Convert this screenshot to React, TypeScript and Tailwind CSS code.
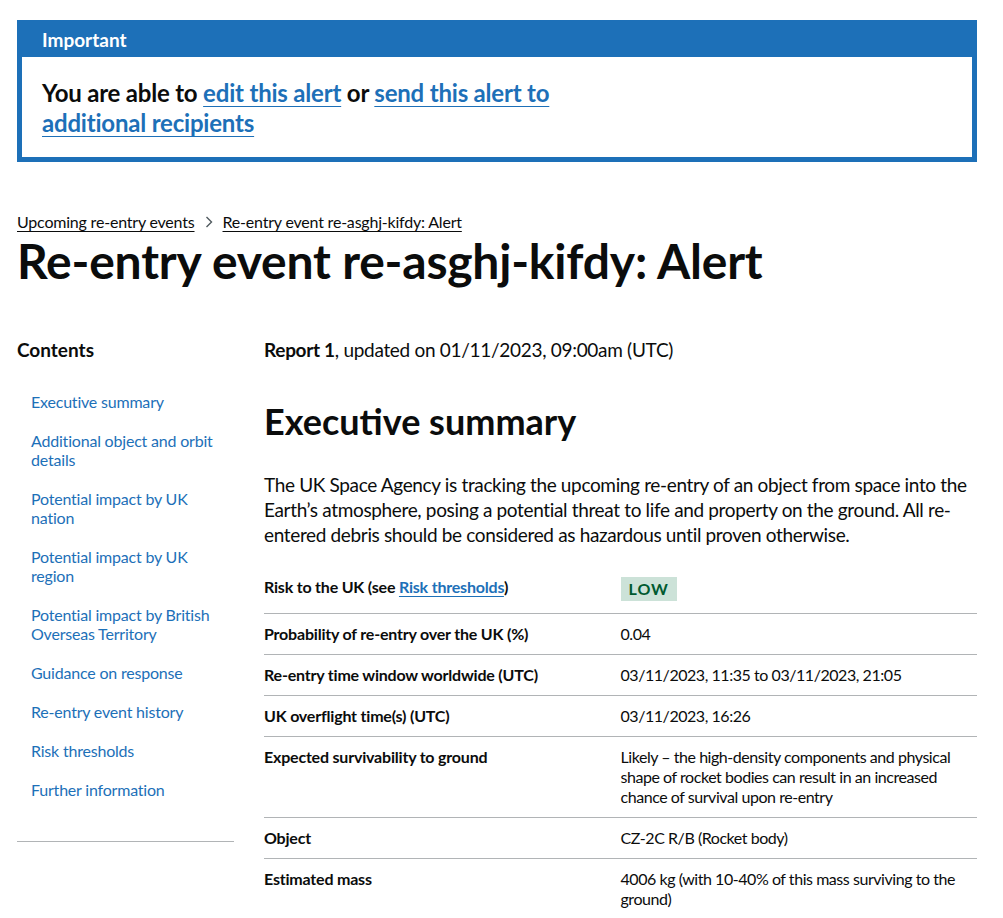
const contents = [
  "Executive summary",
  "Additional object and orbit details",
  "Potential impact by UK nation",
  "Potential impact by UK region",
  "Potential impact by British Overseas Territory",
  "Guidance on response",
  "Re-entry event history",
  "Risk thresholds",
  "Further information",
];

const rows = [
  { label: "Probability of re-entry over the UK (%)", value: "0.04" },
  {
    label: "Re-entry time window worldwide (UTC)",
    value: "03/11/2023, 11:35 to 03/11/2023, 21:05",
  },
  { label: "UK overflight time(s) (UTC)", value: "03/11/2023, 16:26" },
  {
    label: "Expected survivability to ground",
    value:
      "Likely – the high-density components and physical shape of rocket bodies can result in an increased chance of survival upon re-entry",
  },
  { label: "Object", value: "CZ-2C R/B (Rocket body)" },
  {
    label: "Estimated mass",
    value: "4006 kg (with 10-40% of this mass surviving to the ground)",
  },
];

export default function App() {
  return (
    <div className="min-h-screen bg-white px-[17px] pt-5 pb-10 font-['Lato','Liberation_Sans',sans-serif] text-[#0b0c0c]">
      {/* Notification banner */}
      <div className="w-[960px] border-[5px] border-[#1d70b8] bg-[#1d70b8]">
        <div className="px-5 pt-[2px] pb-[5px]">
          <h2 className="text-[19px] font-bold leading-[25px] text-white">Important</h2>
        </div>
        <div className="bg-white px-5 pt-[21px] pb-[19px]">
          <p className="max-w-[605px] text-[24px] font-bold leading-[30px] tracking-[-0.2px]">
            You are able to{" "}
            <a href="#" className="text-[#1d70b8] underline decoration-1 underline-offset-[4px]">
              edit this alert
            </a>{" "}
            or{" "}
            <a href="#" className="text-[#1d70b8] underline decoration-1 underline-offset-[4px]">
              send this alert to additional recipients
            </a>
          </p>
        </div>
      </div>

      {/* Breadcrumbs */}
      <nav className="mt-[50px] flex items-center text-[16px] leading-[20px] tracking-[-0.2px]">
        <a href="#" className="underline decoration-1 underline-offset-[3px]">
          Upcoming re-entry events
        </a>
        <svg className="mx-[10px] h-[12px] w-[8px]" viewBox="0 0 8 12" fill="none">
          <path d="M1.5 1l5 5-5 5" stroke="#505a5f" strokeWidth="1.4" />
        </svg>
        <a href="#" className="underline decoration-1 underline-offset-[3px]">
          Re-entry event re-asghj-kifdy: Alert
        </a>
      </nav>

      <h1 className="mt-[4px] text-[48px] font-bold leading-[50px] tracking-[-0.2px]">
        Re-entry event re-asghj-kifdy: Alert
      </h1>

      <div className="mt-[51px] flex w-[960px] gap-[30px]">
        {/* Contents */}
        <aside className="w-[217px] shrink-0">
          <h2 className="text-[19px] font-bold leading-[25px]">Contents</h2>
          <ul className="mt-[30px] space-y-[20px] pl-[14px] pr-[10px]">
            {contents.map((c) => (
              <li key={c} className="text-[16px] leading-[19px] tracking-[-0.2px]">
                <a href="#" className="text-[#1d70b8]">
                  {c}
                </a>
              </li>
            ))}
          </ul>
          <hr className="mt-[42px] border-t border-[#b1b4b6]" />
        </aside>

        {/* Main */}
        <main className="flex-1">
          <p className="text-[19px] leading-[25px] tracking-[-0.3px]">
            <span className="font-bold">Report 1</span>, updated on 01/11/2023, 09:00am (UTC)
          </p>
          <h2 className="mt-[39px] text-[36px] font-bold leading-[40px]">Executive summary</h2>
          <p className="mt-[31px] text-[19px] leading-[25px] tracking-[-0.35px]">
            The UK Space Agency is tracking the upcoming re-entry of an object from space into the
            Earth’s atmosphere, posing a potential threat to life and property on the ground. All
            re-entered debris should be considered as hazardous until proven otherwise.
          </p>

          <div className="mt-[20px] text-[16px] leading-[20px]">
            <div className="grid grid-cols-2 border-b border-[#b1b4b6] pt-[10px] pb-[12px]">
              <div className="pr-5 font-bold tracking-[-0.2px]">
                Risk to the UK (see{" "}
                <a href="#" className="text-[#1d70b8] underline decoration-1 underline-offset-[3px]">
                  Risk thresholds
                </a>
                )
              </div>
              <div>
                <span className="inline-block bg-[#cce2d8] px-2 pt-[2px] pb-[2px] text-[16px] font-bold tracking-[1px] text-[#005a30]">
                  LOW
                </span>
              </div>
            </div>
            {rows.map((r, i) => (
              <div
                key={r.label}
                className={
                  i < rows.length - 1
                    ? "grid grid-cols-2 border-b border-[#b1b4b6] py-[10px]"
                    : "grid grid-cols-2 py-[10px]"
                }
              >
                <div className="pr-5 font-bold tracking-[-0.2px]">{r.label}</div>
                <div className="tracking-[-0.45px]">{r.value}</div>
              </div>
            ))}
          </div>
        </main>
      </div>
    </div>
  );
}
